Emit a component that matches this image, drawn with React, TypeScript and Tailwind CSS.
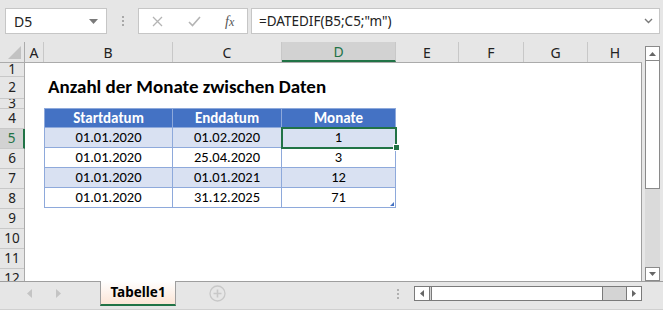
import React from "react";

const COLS = [
  { l: "A", w: 19 },
  { l: "B", w: 129 },
  { l: "C", w: 109 },
  { l: "D", w: 114 },
  { l: "E", w: 63 },
  { l: "F", w: 65 },
  { l: "G", w: 64 },
  { l: "H", w: 54 },
];

const ROWS = [
  { n: "1", h: 14 },
  { n: "2", h: 22 },
  { n: "3", h: 10 },
  { n: "4", h: 20 },
  { n: "5", h: 20 },
  { n: "6", h: 20 },
  { n: "7", h: 20 },
  { n: "8", h: 20 },
  { n: "9", h: 20 },
  { n: "10", h: 20 },
  { n: "11", h: 20 },
  { n: "12", h: 20 },
];

const DATA = [
  ["01.01.2020", "01.02.2020", "1"],
  ["01.01.2020", "25.04.2020", "3"],
  ["01.01.2020", "01.01.2021", "12"],
  ["01.01.2020", "31.12.2025", "71"],
];

const ui = { fontFamily: '"Noto Sans", "Open Sans", sans-serif' };
const cal = { fontFamily: 'Carlito, Lato, "Liberation Sans", sans-serif' };

function TableRow({ cells, header, alt, idx }: { cells: string[]; header?: boolean; alt?: boolean; idx: number }) {
  const widths = ["w-[129px]", "w-[109px]", "w-[114px]"];
  return (
    <div className="flex h-[20px]">
      {cells.map((c, i) => (
        <div
          key={i}
          className={
            widths[i] +
            " h-[20px] flex items-center justify-center border-b border-r border-[#8ea9db] " +
            (i === 0 ? "border-l " : "") +
            (header ? "border-t bg-[#4472c4] text-white font-bold text-[15px] " : alt ? "bg-[#d9e1f2] text-black text-[14.5px] " : "bg-white text-black text-[14.5px] ") +
            ((idx === 1 || idx === 4) && i === 2 ? "relative " : "")
          }
          style={cal}
        >
          {c}
          {idx === 1 && i === 2 && (
            <>
              <div className="absolute left-[-1px] top-[-1px] w-[116px] h-[22px] border-2 border-[#217346]" />
              <div className="absolute right-[-5px] bottom-[-4px] w-[5px] h-[5px] bg-[#217346] border border-white box-content" />
            </>
          )}
          {idx === 4 && i === 2 && (
            <svg className="absolute right-[1px] bottom-[1px]" width="4" height="4" viewBox="0 0 4 4"><path d="M4 0V4H0Z" fill="#4472c4" /></svg>
          )}
        </div>
      ))}
    </div>
  );
}

export default function App() {
  return (
    <div className="w-[663px] h-[310px] bg-[#e6e6e6] flex flex-col overflow-hidden text-[#222]" style={ui}>
      {/* formula bar */}
      <div className="h-[42px] flex items-start pt-[8px] shrink-0">
        <div className="ml-[5px] w-[102px] h-[26px] bg-white border border-[#c6c6c6] flex items-center justify-between pl-[8px] pr-[8px]">
          <span className="text-[14px] text-[#222]">D5</span>
          <svg width="9" height="5" viewBox="0 0 9 5"><path d="M0 0H9L4.5 5Z" fill="#7a7a7a" /></svg>
        </div>
        <div className="w-[31px] h-[26px] flex flex-col items-center justify-center gap-[2px]">
          <div className="w-[2px] h-[2px] bg-[#a8a8a8]" />
          <div className="w-[2px] h-[2px] bg-[#a8a8a8]" />
          <div className="w-[2px] h-[2px] bg-[#a8a8a8]" />
        </div>
        <div className="w-[110px] h-[26px] bg-white border border-[#c6c6c6] flex items-center">
          <svg className="ml-[13px]" width="11" height="11" viewBox="0 0 11 11"><path d="M1 1L10 10M10 1L1 10" stroke="#b4b4b4" strokeWidth="1.3" /></svg>
          <svg className="ml-[25px]" width="13" height="11" viewBox="0 0 13 11"><path d="M1 6L4.5 9.5L12 1" stroke="#b4b4b4" strokeWidth="1.6" fill="none" /></svg>
          <span className="ml-[24px] text-[14px] italic text-[#555]" style={{ fontFamily: '"Liberation Serif", serif' }}>f<span className="text-[12px]">x</span></span>
        </div>
        <div className="ml-[3px] w-[409px] h-[26px] bg-white border border-[#c6c6c6] flex items-center justify-between pl-[7px] pr-[6px]">
          <span className="text-[13.5px] text-[#222]">=DATEDIF(B5;C5;"m")</span>
          <svg width="9" height="6" viewBox="0 0 9 6"><path d="M1 1L4.5 4.5L8 1" stroke="#7a7a7a" strokeWidth="1.4" fill="none" /></svg>
        </div>
      </div>

      {/* main */}
      <div className="flex h-[239px] shrink-0">
        <div className="w-[642px] flex flex-col">
          {/* column headers */}
          <div className="flex h-[21px] border-b border-[#ababab]">
            <div className="w-[25px] h-full flex items-end justify-end pr-[3px] pb-[3px] border-r border-[#ababab]">
              <svg width="13" height="13" viewBox="0 0 13 13"><path d="M13 0V13H0Z" fill="#c2c2c2" /></svg>
            </div>
            {COLS.map((c) => (
              <div
                key={c.l}
                style={{ width: c.w }}
                className={
                  "h-full flex items-center justify-center text-[14px] border-r border-[#c8c8c8] " +
                  (c.l === "D" ? "bg-[#d2d2d2] text-[#217346] border-b-2 border-b-[#217346]" : "text-[#222]") +
                  (c.l === "H" ? " border-r-0" : "")
                }
              >
                {c.l}
              </div>
            ))}
          </div>
          {/* body */}
          <div className="flex flex-1 overflow-hidden">
            <div className="w-[25px] flex flex-col border-r border-[#ababab] shrink-0">
              {ROWS.map((r) => (
                <div
                  key={r.n}
                  style={{ height: r.h }}
                  className={
                    "shrink-0 flex items-center justify-center text-[13.5px] leading-none border-b border-[#c8c8c8] overflow-hidden " +
                    (r.n === "5" ? "bg-[#d2d2d2] text-[#217346] border-r-2 border-r-[#217346] -mr-[1px]" : "text-[#222]")
                  }
                >
                  {r.n}
                </div>
              ))}
            </div>
            <div className="flex-1 bg-white border-r border-[#9e9e9e] flex flex-col">
              <div className="h-[14px] shrink-0" />
              <div className="h-[22px] shrink-0 flex items-end pl-[23px] pb-[3px]">
                <span className="text-[19px] font-bold text-black leading-none" style={cal}>
                  Anzahl der Monate zwischen Daten
                </span>
              </div>
              <div className="h-[10px] shrink-0" />
              <div className="pl-[19px] -mt-[1px] flex flex-col">
                <TableRow cells={["Startdatum", "Enddatum", "Monate"]} header idx={0} />
                {DATA.map((r, i) => (
                  <TableRow key={i} cells={r} alt={i % 2 === 0} idx={i + 1} />
                ))}
              </div>
            </div>
          </div>
        </div>
        {/* vertical scrollbar */}
        <div className="w-[21px] flex flex-col items-center pt-[4px]">
          <div className="w-[15px] h-[15px] border border-[#8a8a8a] bg-white flex items-center justify-center">
            <svg width="7" height="4" viewBox="0 0 7 4"><path d="M0 4H7L3.5 0Z" fill="#666" /></svg>
          </div>
          <div className="w-[15px] flex-1 bg-[#dadada] flex flex-col">
            <div className="h-[128px] bg-white border-x border-b border-[#8a8a8a]" />
          </div>
          <div className="w-[15px] h-[14px] border border-[#8a8a8a] bg-white flex items-center justify-center">
            <svg width="7" height="4" viewBox="0 0 7 4"><path d="M0 0H7L3.5 4Z" fill="#666" /></svg>
          </div>
        </div>
      </div>

      {/* tab bar */}
      <div className="flex h-[29px] shrink-0 border-b border-[#d0d0d0]">
        <div className="w-[100px] border-t border-[#9e9e9e] flex items-center pb-[4px]">
          <svg className="ml-[27px]" width="5" height="9" viewBox="0 0 5 9"><path d="M5 0V9L0 4.5Z" fill="#c4c4c4" /></svg>
          <svg className="ml-[24px]" width="5" height="9" viewBox="0 0 5 9"><path d="M0 0V9L5 4.5Z" fill="#c4c4c4" /></svg>
        </div>
        <div className="w-[76px] h-[25px] border-x border-[#9e9e9e] border-b-2 border-b-[#217346] bg-gradient-to-b from-white to-[#fbe5d6] flex items-center justify-center">
          <span className="text-[13.5px] font-bold text-black" style={ui}>Tabelle1</span>
        </div>
        <div className="flex-1 border-t border-[#9e9e9e] flex items-center pb-[4px]">
          <svg className="ml-[33px]" width="17" height="17" viewBox="0 0 17 17">
            <circle cx="8.5" cy="8.5" r="7.5" fill="none" stroke="#c8c8c8" strokeWidth="1.3" />
            <path d="M8.5 4.5V12.5M4.5 8.5H12.5" stroke="#c8c8c8" strokeWidth="1.6" />
          </svg>
          <div className="ml-[171px] flex flex-col gap-[2px]">
            <div className="w-[2px] h-[2px] bg-[#b0b0b0]" />
            <div className="w-[2px] h-[2px] bg-[#b0b0b0]" />
            <div className="w-[2px] h-[2px] bg-[#b0b0b0]" />
          </div>
          <div className="ml-[15px] flex h-[15px] w-[228px] border border-[#7a7a7a] bg-[#d4d4d4]">
            <div className="w-[15px] h-full bg-white border-r border-[#7a7a7a] flex items-center justify-center">
              <svg width="4" height="7" viewBox="0 0 4 7"><path d="M4 0V7L0 3.5Z" fill="#666" /></svg>
            </div>
            <div className="w-[172px] h-full bg-white border-x border-[#7a7a7a] ml-[1px]" />
            <div className="flex-1" />
            <div className="w-[15px] h-full bg-white border-l border-[#7a7a7a] flex items-center justify-center">
              <svg width="4" height="7" viewBox="0 0 4 7"><path d="M0 0V7L4 3.5Z" fill="#666" /></svg>
            </div>
          </div>
        </div>
      </div>
    </div>
  );
}
